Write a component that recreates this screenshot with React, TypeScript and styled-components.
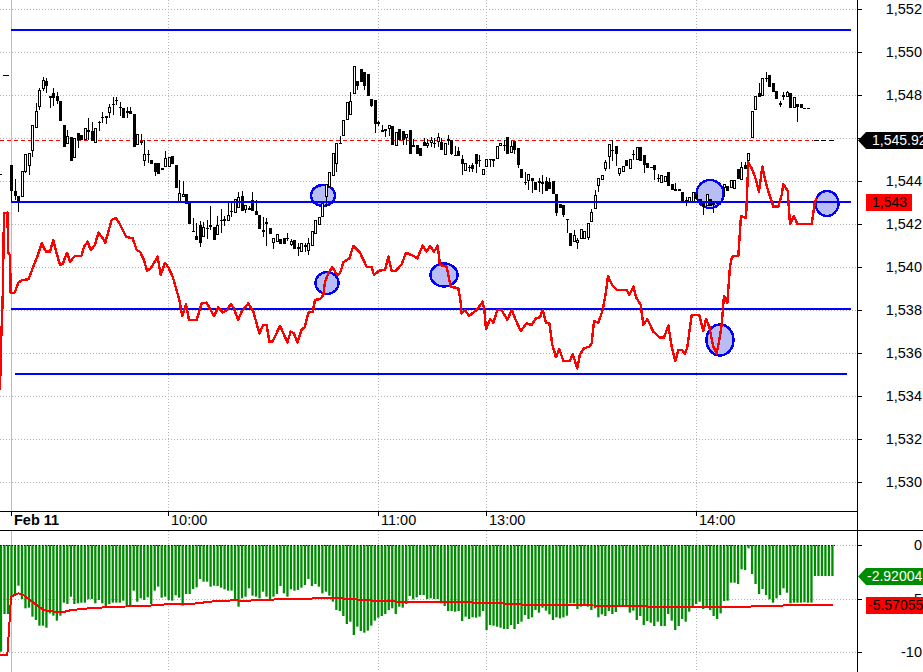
import React from "react";
import styled, { createGlobalStyle } from "styled-components";

// series are traced from the chart at 3x, so y/3 gives the page pixel
type Candle = [number, number, number, number, number]; // top, bottom, high, low, filled

const candles: Candle[] = [
  [495,572,0,605,1],[573,587,537,600,1],[587,605,0,635,1],[514,592,0,0,0],[462,515,0,520,0],[460,497,0,525,0],[376,452,0,470,0],[333,385,308,0,0],
  [270,320,265,330,0],[240,266,230,272,0],[243,257,235,278,1],[288,295,0,323,1],[280,293,264,318,1],[288,302,275,312,1],[303,362,0,0,1],[375,440,0,0,1],
  [409,431,390,0,0],[411,482,0,0,1],[413,473,0,0,0],[400,420,0,445,1],[406,421,0,0,1],[385,421,0,0,0],[391,396,355,420,1],[393,422,365,0,1],
  [385,428,0,0,0],[365,368,362,393,1],[351,355,335,370,1],[348,353,0,373,1],[322,338,312,355,0],[313,316,290,345,1],[300,304,292,315,1],[320,322,305,347,1],
  [324,354,0,0,1],[333,338,320,355,1],[334,343,322,0,1],[343,440,0,0,1],[403,434,0,0,0],[424,430,402,435,1],[463,482,420,497,0],[463,466,450,490,1],
  [481,493,0,0,1],[488,515,0,527,1],[490,522,0,0,1],[504,509,0,0,1],[475,500,453,0,0],[472,502,0,0,0],[469,492,0,0,1],[494,565,0,0,1],
  [580,605,541,0,0],[583,590,544,0,0],[583,612,0,0,1],[608,672,0,0,1],[693,697,655,0,1],[708,720,670,0,1],[676,730,662,740,1],[682,710,665,0,0],
  [685,688,660,718,1],[676,681,618,690,1],[680,720,0,0,1],[676,706,647,0,0],[660,664,628,700,1],[658,664,648,678,1],[645,662,605,0,0],[633,637,605,650,1],
  [597,638,0,0,0],[592,625,575,0,0],[587,632,574,0,1],[615,630,0,638,0],[624,631,618,0,0],[601,632,576,0,1],[633,645,600,0,1],[645,687,0,0,1],
  [690,697,650,710,0],[667,673,655,738,0],[685,702,0,0,1],[715,728,0,747,0],[702,725,0,0,0],[717,731,0,0,1],[715,731,0,0,1],[713,716,698,723,1],
  [724,734,717,738,0],[720,747,0,0,1],[742,748,730,768,0],[728,755,0,0,0],[736,742,730,755,1],[730,752,715,765,0],
  [693,737,0,0,0],[660,703,0,0,0],[652,674,0,0,0],[610,650,0,0,0],[553,590,0,620,0],[517,562,0,0,0],[460,528,0,0,0],[430,492,0,515,0],
  [429,431,408,0,1],[360,407,0,0,0],[306,360,0,0,0],[303,345,275,0,0],[198,281,0,0,0],[243,257,0,270,1],[207,245,0,0,1],[217,258,0,270,1],
  [222,287,0,0,1],[298,318,0,322,1],[301,372,0,398,1],[366,372,362,378,1],[391,397,375,0,0],[387,392,0,410,1],[376,386,0,408,0],[379,434,0,0,1],
  [396,437,0,0,0],[387,419,0,0,1],[393,419,0,435,1],[403,413,0,435,0],[390,461,0,0,1],[436,440,416,0,1],[436,461,0,0,1],[444,467,0,0,1],
  [427,438,415,0,1],[429,437,418,445,0],[420,428,410,440,0],[429,433,415,445,1],[412,425,400,440,0],[427,449,415,0,1],[430,464,0,0,0],[418,422,405,435,1],
  [421,462,0,465,1],[465,467,438,0,1],[453,467,440,0,1],[477,491,465,525,1],[490,512,0,0,0],[501,505,495,515,1],[494,506,490,515,1],[462,491,0,520,1],
  [479,484,465,502,1],[508,524,0,0,0],[477,501,0,0,0],[477,481,0,502,1],[477,482,0,502,1],[438,476,0,0,0],[430,437,0,0,0],[434,437,420,453,1],
  [411,461,0,0,1],[439,458,422,0,0],[423,449,0,462,1],[445,494,0,505,1],[507,535,0,0,1],[546,550,515,555,1],[523,544,0,570,0],[535,543,0,578,1],
  [546,570,0,0,1],[544,550,535,575,1],[545,553,525,582,1],[543,573,530,0,1],[545,566,535,0,1],[543,582,0,0,1],[582,638,0,647,1],[613,623,0,0,1],
  [616,645,0,652,1],[658,660,0,700,1],[699,738,0,0,1],[705,726,690,0,0],[720,728,713,748,0],[688,718,0,0,0],[692,716,0,0,0],[669,715,0,720,0],
  [637,666,626,0,0],[585,628,570,0,0],[535,557,0,575,0],[526,539,0,0,0],[486,506,480,512,0],[433,472,0,508,0],
  [450,452,420,483,1],[438,463,0,497,1],[505,522,0,527,0],[497,517,0,0,0],[480,498,0,0,1],[477,508,0,0,0],[462,465,450,480,1],[440,480,0,0,0],
  [440,482,0,0,1],[465,495,0,518,1],[488,505,0,0,1],[502,505,0,0,1],[495,510,0,540,1],[535,537,522,545,1],[525,548,0,0,0],[527,545,0,0,0],
  [517,558,0,0,1],[552,570,0,0,1],[566,573,550,0,1],[568,573,0,0,1],[577,603,0,0,1],[600,605,590,618,1],[590,610,0,0,0],[575,610,0,0,0],
  [582,597,0,0,1],[597,608,0,0,1],[605,620,0,645,1],[583,618,0,0,0],[597,618,0,0,1],[610,615,0,640,1],[608,612,0,0,1],[603,610,0,0,1],
  [552,565,0,590,0],[558,572,0,0,1],[540,565,0,0,0],[540,566,0,0,0],[508,538,0,0,1],[500,540,487,0,0],[495,507,485,0,1],[460,484,0,0,0],
  [334,413,0,0,0],[289,330,0,0,0],[280,290,250,0,1],[235,288,0,0,0],[233,235,215,247,1],[225,262,0,0,1],[250,276,0,0,1],[274,296,0,0,1],
  [310,314,303,320,1],[286,292,275,300,1],[277,290,272,0,0],[280,325,0,0,1],[290,325,0,0,0],[312,322,0,365,1],[312,325,0,0,1],[324,325,0,0,1],[324,325,0,0,1],
];

const redLine = [
  [0,1170],[3,1035],[8,900],[10,775],[12,640],[22,638],[25,760],[30,765],[32,880],[44,878],[55,848],[66,840],[85,838],[98,805],[112,770],[125,730],[138,755],[150,755],[160,720],[170,760],[180,795],[188,792],[201,758],[210,785],[225,768],[245,767],[252,740],[263,725],[272,750],[285,735],[295,698],[305,710],[316,728],[325,695],[335,660],[348,654],[358,670],[378,710],[398,715],[410,750],[420,755],[432,780],[441,813],[452,805],[473,770],[482,825],[495,788],[505,802],[518,830],[528,865],[537,895],[547,948],[558,912],[567,960],[590,960],[605,910],[620,908],[642,948],[655,922],[668,937],[680,932],[692,912],[702,925],[714,960],[725,935],[745,910],[760,935],[778,1000],[790,975],[800,975],[808,1025],[818,1025],[840,977],[862,1027],[872,995],[882,1000],[892,1027],[905,988],[914,982],[925,938],
  [938,935],[945,900],[960,897],[970,885],[975,845],[985,820],[997,802],[1012,825],[1020,820],[1030,787],[1048,775],[1060,738],[1080,758],[1100,800],[1115,802],[1122,825],[1137,812],[1155,810],[1165,770],[1175,813],[1188,812],[1205,793],[1218,758],[1240,768],[1252,775],[1268,737],[1280,755],[1290,737],[1302,755],[1313,737],[1320,795],[1340,800],[1352,860],[1375,865],[1382,905],[1384,940],[1395,930],[1407,948],[1430,930],[1448,905],[1453,930],[1458,988],[1470,957],[1480,968],[1492,930],[1505,930],[1522,960],[1535,930],[1545,955],[1562,993],[1580,970],[1595,975],[1608,955],[1620,952],[1628,930],[1638,968],[1648,970],[1657,1035],[1668,1072],[1678,1047],[1690,1082],[1710,1083],[1718,1062],[1732,1105],[1740,1062],[1752,1045],[1768,1040],[1775,1030],[1782,963],[1795,968],[1808,930],[1818,875],[1824,828],
  [1838,858],[1852,870],[1880,870],[1888,885],[1900,860],[1908,892],[1922,915],[1930,975],[1942,957],[1960,995],[1980,1013],[1992,1013],[2005,977],[2015,1040],[2026,1083],[2035,1050],[2047,1050],[2055,1063],[2062,1040],[2075,945],[2098,945],[2110,993],[2118,957],[2128,980],[2140,1040],[2150,1060],[2158,1020],[2165,975],[2172,888],[2182,908],[2190,800],[2196,770],[2215,767],[2223,647],[2238,655],[2245,487],[2255,505],[2265,530],[2277,575],[2287,500],[2298,550],[2310,590],[2320,620],[2335,620],[2345,585],[2350,552],[2363,572],[2370,672],[2382,648],[2392,672],[2435,672],[2445,605],[2450,595],
];

const bars = [
  455,342,342,290,285,257,297,325,323,350,360,377,377,383,340,347,362,347,308,312,290,312,310,308,308,298,297,310,300,310,322,312,308,308,308,302,320,315,272,305,295,300,292,312,272,260,293,290,300,302,286,293,317,282,282,267,262,237,245,245,260,257,258,263,268,272,272,300,320,295,290,265,287,290,295,275,290,297,290,282,258,280,290,268,272,270,263,255,237,
  258,252,260,280,275,287,305,330,333,348,372,365,405,380,393,398,392,377,362,353,348,342,330,325,342,320,323,312,288,298,292,285,285,297,295,297,297,310,318,333,333,335,333,363,350,357,352,353,350,333,390,375,377,380,383,387,387,375,387,372,365,345,357,352,330,338,323,332,343,360,352,355,352,347,310,310,327,320,315,320,330,325,352,343,348,333,
  342,336,320,318,320,338,332,360,348,375,363,368,378,365,378,378,342,362,390,378,357,365,335,320,312,305,327,320,330,348,357,340,303,302,248,248,252,208,210,145,222,252,282,267,285,298,308,295,285,265,278,310,308,308,308,307,308,308,228,228,228,228,228,228,
];

// y here is traced from the crop that starts at page y 500
const signal = [
  [0,465],[22,465],[28,375],[33,290],[44,285],[55,280],[70,285],[90,300],[110,315],[130,330],[150,334],[190,336],[215,330],[245,327],[275,324],[340,321],[415,318],[465,316],[510,312],[580,311],[650,303],[705,301],[735,303],[780,299],[870,298],[950,295],[995,293],[1065,298],[1150,304],[1220,305],[1330,305],[1500,310],[1570,314],[1730,315],[1830,318],[1980,320],[2080,320],[2238,320],[2365,316],[2498,314],
];

const circles = [
  { cx: 323, cy: 195.5, rx: 12, ry: 10.5 },
  { cx: 327, cy: 283, rx: 11.5, ry: 11 },
  { cx: 444, cy: 275, rx: 13.5, ry: 11.5 },
  { cx: 710, cy: 194, rx: 13.5, ry: 14 },
  { cx: 720, cy: 340, rx: 13.5, ry: 15.5 },
  { cx: 827, cy: 203.5, rx: 11.5, ry: 12.5 },
];

const levels = [
  ["1,552", 9], ["1,550", 52], ["1,548", 95], ["1,544", 181], ["1,542", 224], ["1,540", 267], ["1,538", 310],
  ["1,536", 353], ["1,534", 396], ["1,532", 439], ["1,530", 482],
] as const;
const gridRows = [9, 52, 95, 138, 181, 224, 267, 310, 353, 396, 439, 482];
const gridCols = [168, 378, 486, 696];
const times = [
  { x: 168, label: "10:00" },
  { x: 378, label: "11:00" },
  { x: 486, label: "13:00" },
  { x: 696, label: "14:00" },
];

const barX = (i: number) => Math.round((34 + 10.48 * i) / 3);
const toPoints = (pts: number[][]) => pts.map(([x, y]) => `${x / 3},${y / 3}`).join(" ");

const GlobalStyle = createGlobalStyle`
  html, body {
    margin: 0;
    padding: 0;
    background: #fff;
  }
`;

const Workspace = styled.div`
  display: grid;
  grid-template-columns: 857px 66px;
  grid-template-rows: 511px 20px 141px;
  width: 923px;
  height: 672px;
  overflow: hidden;
  background: #fff;
  font-family: "Liberation Sans", Arial, sans-serif;
  font-size: 14px;
  color: #000;
`;

const Plot = styled.svg`
  display: block;
`;

const TimeStrip = styled.div`
  border-top: 1px solid #000;
  border-bottom: 1px solid #000;
`;

const AxisCell = styled.div`
  position: relative;
  border-left: 1px solid #000;
  overflow: hidden;
`;

const AxisCorner = styled.div`
  border-left: 1px solid #000;
  border-bottom: 1px solid #000;
`;

const ChartText = styled.text<{ $bold?: boolean }>`
  font-family: "Liberation Sans", Arial, sans-serif;
  font-size: 14.5px;
  font-weight: ${(p) => (p.$bold ? 700 : 400)};
  fill: #000;
`;

const ValueTag = styled.div<{ $top: number; $left: number; $width: number; $bg: string; $fg: string; $pad: number; $pointer?: boolean }>`
  position: absolute;
  top: ${(p) => p.$top}px;
  left: ${(p) => p.$left}px;
  width: ${(p) => p.$width}px;
  height: 17px;
  box-sizing: border-box;
  padding-left: ${(p) => p.$pad}px;
  line-height: 17px;
  white-space: nowrap;
  overflow: hidden;
  background: ${(p) => p.$bg};
  color: ${(p) => p.$fg};
  ${(p) => p.$pointer && "clip-path: polygon(8px 0, 100% 0, 100% 100%, 8px 100%, 0 50%);"}
`;

function GridRow({ y, x2 = 857 }: { y: number; x2?: number }) {
  return <line x1={0} x2={x2} y1={y + 0.5} y2={y + 0.5} stroke="#b4b4b4" strokeDasharray="1 2" />;
}

function GridCols({ y1, y2 }: { y1: number; y2: number }) {
  return (
    <>
      <line x1={11.5} x2={11.5} y1={y1} y2={y2} stroke="#bdbdbd" />
      {gridCols.map((x) => (
        <line key={x} x1={x + 0.5} x2={x + 0.5} y1={y1} y2={y2} stroke="#b4b4b4" strokeDasharray="1 2" />
      ))}
    </>
  );
}

function Candles() {
  return (
    <g shapeRendering="crispEdges">
      {candles.map(([top, bottom, high, low, filled], i) => {
        const x = barX(i);
        const y1 = Math.round(top / 3);
        const y2 = Math.max(Math.round(bottom / 3), y1 + 1);
        return (
          <g key={i}>
            <line x1={x + 0.5} x2={x + 0.5} y1={(high || top) / 3} y2={(low || bottom) / 3} stroke="#000" />
            {filled ? (
              <rect x={x - 1} y={y1} width={3} height={y2 - y1} fill="#000" />
            ) : (
              <rect x={x - 0.5} y={y1 + 0.5} width={2} height={y2 - y1 - 1} fill="#fff" stroke="#000" />
            )}
          </g>
        );
      })}
    </g>
  );
}

function PricePane() {
  return (
    <Plot width={857} height={511} viewBox="0 0 857 511">
      {gridRows.map((y) => <GridRow key={y} y={y} />)}
      <GridCols y1={0} y2={511} />
      <line x1={0} x2={813} y1={140.5} y2={140.5} stroke="#ff0000" strokeDasharray="4 3" />
      <g shapeRendering="crispEdges" stroke="#000">
        <line x1={3} x2={9} y1={75.5} y2={75.5} />
        <line x1={0} x2={2} y1={174.5} y2={174.5} />
        <line x1={814} x2={819} y1={140.5} y2={140.5} />
        <line x1={821} x2={826} y1={140.5} y2={140.5} />
        <line x1={829} x2={834} y1={140.5} y2={140.5} />
      </g>
      <g shapeRendering="crispEdges">
        {circles.map((c) => (
          <ellipse key={c.cx} {...c} fill="#b9bdf5" stroke="#0000ff" strokeWidth={2.4} />
        ))}
      </g>
      <Candles />
      <g stroke="#0000ff" strokeWidth={2} shapeRendering="crispEdges">
        <line x1={11} x2={851} y1={30} y2={30} />
        <line x1={11} x2={851} y1={202} y2={202} />
        <line x1={11} x2={851} y1={309} y2={309} />
        <line x1={15} x2={847} y1={374} y2={374} />
      </g>
      <polyline points={toPoints(redLine)} fill="none" stroke="#ff0000" strokeWidth={2.4} strokeLinejoin="round" shapeRendering="crispEdges" />
    </Plot>
  );
}

function PriceAxis() {
  return (
    <AxisCell>
      <Plot width={65} height={511} viewBox="858 0 65 511">
        {[...levels.map((l) => l[1]), 138].map((y) => (
          <line key={y} x1={858} x2={862} y1={y + 0.5} y2={y + 0.5} stroke="#000" />
        ))}
        {levels.map(([label, y]) => (
          <ChartText key={label} x={922} y={y + 5} textAnchor="end">{label}</ChartText>
        ))}
      </Plot>
      <ValueTag $top={132} $left={0} $width={65} $bg="#000" $fg="#fff" $pad={14} $pointer>1,545.92</ValueTag>
      <ValueTag $top={194} $left={8} $width={46} $bg="#ff0000" $fg="#000" $pad={6}>1,543</ValueTag>
    </AxisCell>
  );
}

function TimeAxis() {
  return (
    <TimeStrip>
      <Plot width={857} height={18} viewBox="0 512 857 18">
        <line x1={11.5} x2={11.5} y1={512} y2={516} stroke="#000" />
        <ChartText $bold x={14} y={525}>Feb 11</ChartText>
        {times.map((t) => (
          <g key={t.x}>
            <line x1={t.x + 0.5} x2={t.x + 0.5} y1={512} y2={516} stroke="#000" />
            <ChartText x={t.x + 3} y={525}>{t.label}</ChartText>
          </g>
        ))}
      </Plot>
    </TimeStrip>
  );
}

function IndicatorPane() {
  return (
    <Plot width={857} height={141} viewBox="0 531 857 141">
      <GridRow y={545} />
      <GridRow y={599} />
      <GridRow y={652} />
      <GridCols y1={531} y2={672} />
      <g fill="#008c00">
        {bars.map((bottom, i) => (
          <rect key={i} x={(34 + 10.48 * (i - 3)) / 3 - 1} y={545} width={2.3} height={500 + bottom / 3 - 545} />
        ))}
      </g>
      <line x1={0} x2={835} y1={545.5} y2={545.5} stroke="#000" strokeDasharray="1 2" />
      <polyline
        points={signal.map(([x, y]) => `${x / 3},${500 + y / 3}`).join(" ")}
        fill="none"
        stroke="#ff0000"
        strokeWidth={2}
        shapeRendering="crispEdges"
      />
    </Plot>
  );
}

function IndicatorAxis() {
  return (
    <AxisCell>
      <Plot width={65} height={141} viewBox="858 531 65 141">
        {[545, 599, 652].map((y) => (
          <line key={y} x1={858} x2={862} y1={y + 0.5} y2={y + 0.5} stroke="#000" />
        ))}
        <ChartText x={922} y={550} textAnchor="end">0</ChartText>
        <ChartText x={922} y={604} textAnchor="end">-5</ChartText>
        <ChartText x={922} y={657} textAnchor="end">-10</ChartText>
      </Plot>
      <ValueTag $top={37} $left={0} $width={65} $bg="#008c00" $fg="#fff" $pad={9} $pointer>-2.92004</ValueTag>
      <ValueTag $top={66} $left={8} $width={57} $bg="#ff0000" $fg="#000" $pad={2}>-5.57055</ValueTag>
    </AxisCell>
  );
}

export default function App() {
  return (
    <>
      <GlobalStyle />
      <Workspace>
        <PricePane />
        <PriceAxis />
        <TimeAxis />
        <AxisCorner />
        <IndicatorPane />
        <IndicatorAxis />
      </Workspace>
    </>
  );
}
